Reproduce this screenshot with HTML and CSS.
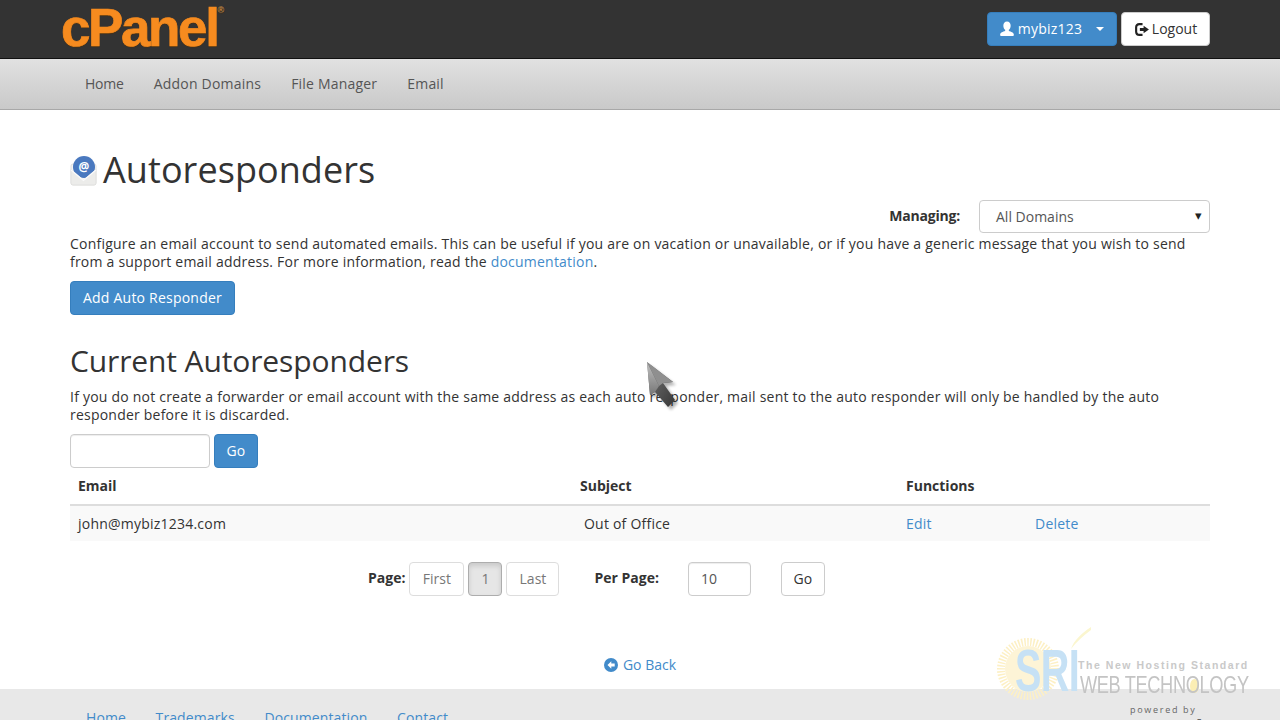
FILE: index.html
```html
<!DOCTYPE html>
<html lang="en">
<head>
<meta charset="utf-8">
<title>Autoresponders</title>
<link rel="stylesheet" href="styles.css">
</head>
<body>
<header class="topbar">
  <div class="logo">cPanel<sup class="reg">®</sup></div>
  <div class="top-actions">
    <a class="btn btn-primary user-btn">
      <svg class="ico" viewBox="0 0 14 14" width="16" height="16"><path fill="#fff" d="M7 .5c2 0 3.200 1.500 3.200 3.600 0 1.500-.7 2.900-1.600 3.600v1.100c1.900.7 4.400 1.400 4.400 3.200 0 .7-.4 1.100-1 1.100H2c-.6 0-1-.4-1-1.100 0-1.800 2.500-2.500 4.400-3.200V7.700C4.500 7 3.800 5.600 3.800 4.100 3.800 2 5 .5 7 .5z"/></svg>
      <span>mybiz123</span>
      <span class="caret"></span>
    </a>
    <a class="btn btn-default logout-btn">
      <svg class="ico" viewBox="0 0 15 14" width="16" height="15"><path fill="#222" d="M5 1h3v2H5C4 3 3 3.800 3 5v4c0 1.200 1 2 2 2h3v2H5C2.500 13 1 11.500 1 9V5c0-2.500 1.500-4 4-4zm4 2.600L14 7l-5 3.400V8.500H5.500v-3H9V3.600z"/></svg>
      <span>Logout</span>
    </a>
  </div>
</header>
<nav class="subnav">
  <a>Home</a><a>Addon Domains</a><a>File Manager</a><a>Email</a>
</nav>
<main class="content">
  <h1 class="page-title">
    <svg class="title-icon" viewBox="0 0 27 30" width="27" height="30">
      <rect x="1" y="8" width="25" height="21" rx="2" fill="#f6f6f5" stroke="#d8d8d6" stroke-width=".8"/>
      <circle cx="14" cy="11" r="11" fill="#4a79bf"/>
      <path d="M1 13.500L13.500 24 26 13.500V27a2 2 0 0 1-2 2H3a2 2 0 0 1-2-2z" fill="#ececea" stroke="#dcdcda" stroke-width=".6"/>
      <path d="M1 14L13.500 24.500 26 14" fill="none" stroke="#fafafa" stroke-width="1.200"/>
      <text x="14" y="15" class="at">@</text>
    </svg>
    <span>Autoresponders</span>
  </h1>
  <div class="managing">
    <label>Managing:</label>
    <div class="select"><span>All Domains</span><span class="select-arrow">▾</span></div>
  </div>
  <p class="para">Configure an email account to send automated emails. This can be useful if you are on vacation or unavailable, or if you have a generic message that you wish to send from a support email address. For more information, read the <a class="link">documentation</a>.</p>
  <a class="btn btn-primary add-btn">Add Auto Responder</a>
  <h2 class="section-title">Current Autoresponders</h2>
  <p class="para">If you do not create a forwarder or email account with the same address as each auto responder, mail sent to the auto responder will only be handled by the auto responder before it is discarded.</p>
  <div class="search">
    <div class="input search-input"></div>
    <a class="btn btn-primary go-btn">Go</a>
  </div>
  <table class="list">
    <colgroup><col class="c1"><col class="c2"><col class="c3"><col class="c4"></colgroup>
    <thead><tr><th>Email</th><th>Subject</th><th colspan="2">Functions</th></tr></thead>
    <tbody><tr><td>john@mybiz1234.com</td><td class="subject">Out of Office</td><td><a class="link">Edit</a></td><td><a class="link">Delete</a></td></tr></tbody>
  </table>
  <div class="pager">
    <b class="page-label">Page:</b>
    <a class="btn btn-off first">First</a>
    <a class="btn btn-current">1</a>
    <a class="btn btn-off last">Last</a>
    <b class="per-label">Per Page:</b>
    <div class="input per-input">10</div>
    <a class="btn btn-default per-go">Go</a>
  </div>
  <div class="goback">
    <svg viewBox="0 0 14 14" width="14" height="14"><circle cx="7" cy="7" r="7" fill="#428bca"/><path fill="#fff" d="M7.300 3.200L3.500 7l3.800 3.800V8.500h3.400v-3H7.300z"/></svg>
    <a class="link">Go Back</a>
  </div>
</main>
<footer class="footer">
  <a>Home</a><a>Trademarks</a><a>Documentation</a><a>Contact</a>
</footer>
<div class="watermark">
  <svg class="sun" viewBox="0 0 110 85" width="110" height="85">
    <circle cx="38" cy="44" r="27" fill="none" stroke="#fdf0c4" stroke-width="8" stroke-dasharray="1.500 1.500"/>
    <circle cx="38" cy="44" r="23" fill="#fdf4d6"/>
    <path d="M101 2C92 8 84 15 81 24c5-7 12-13 20-19z" fill="#fbf6cf"/>
  </svg>
  <span class="wm-sri">SRI</span>
  <span class="wm-tag">The New Hosting Standard</span>
  <span class="wm-dot"></span>
  <span class="wm-web">WEB TECHNOLOGY</span>
  <span class="wm-powered">powered by</span>
  <span class="wm-cpanel">cPanel</span>
</div>
<svg class="cursor" viewBox="0 0 40 54" width="40" height="54">
  <defs>
    <filter id="cs" x="-30%" y="-30%" width="160%" height="160%"><feGaussianBlur stdDeviation="1.800"/></filter>
    <linearGradient id="lf" x1="0" y1="0" x2="0" y2="1"><stop offset="0" stop-color="#c0c0c0"/><stop offset="1" stop-color="#777"/></linearGradient>
    <linearGradient id="rf" x1="0" y1="0" x2="1" y2="1"><stop offset="0" stop-color="#7a7a7a"/><stop offset="1" stop-color="#363636"/></linearGradient>
  </defs>
  <path d="M5 5L31 25 21 26 33 43 26 50 13 35 8 38z" fill="#000" opacity=".3" filter="url(#cs)"/>
  <path d="M2 2L5 35 10 32 23 47 30 40 18 23 28 22z" fill="url(#rf)"/>
  <path d="M2 2L5 35 10 32 14 26z" fill="url(#lf)"/>
  <path d="M2 2L14 26 18 23 28 22z" fill="#8f8f8f"/>
</svg>
</body>
</html>
```
FILE: styles.css
```css
* { box-sizing: border-box; }
html, body { margin: 0; height: 720px; overflow: hidden; }
body {
  font-family: "Open Sans", sans-serif;
  font-size: 14px;
  line-height: 18px;
  letter-spacing: .22px;
  color: #333;
  background: #fff;
  position: relative;
  display: flex;
  flex-direction: column;
}
b, th, label { letter-spacing: 0; }
.topbar {
  height: 59px;
  flex: none;
  background: #333;
  border-bottom: 1px solid #111;
  display: flex;
  justify-content: space-between;
  padding: 0 70px 0 61px;
}
.logo {
  font-family: "Liberation Sans", sans-serif;
  font-weight: 700;
  font-size: 53px;
  line-height: 56px;
  letter-spacing: -2.400px;
  color: #f68b1f;
  -webkit-text-stroke: .7px #f68b1f;
  text-shadow: 0 1px 1px #4a3010;
}
.reg {
  font-size: 9px;
  line-height: 0;
  letter-spacing: 0;
  color: #c08a48;
  -webkit-text-stroke: 0;
  vertical-align: 33px;
  margin-left: 0;
}
.top-actions { display: flex; gap: 4px; padding-top: 12px; }
.btn {
  display: inline-flex;
  align-items: center;
  justify-content: center;
  height: 34px;
  border: 1px solid transparent;
  border-radius: 4px;
  white-space: nowrap;
}
.btn-primary { background: #428bca; border-color: #357ebd; color: #fff; }
.btn-default { background: #fff; border-color: #ccc; color: #333; }
.user-btn { width: 130px; gap: 3px; padding-right: 2px; }
.caret {
  width: 0; height: 0;
  border-left: 4px solid transparent;
  border-right: 4px solid transparent;
  border-top: 4px solid #fff;
  margin-left: 10px;
  position: relative;
  left: 1px;
}
.logout-btn { width: 89px; gap: 2px; letter-spacing: 0; }
.ico { flex: none; }
.subnav {
  height: 51px;
  flex: none;
  background: linear-gradient(#e1e1e1, #c9c9c9);
  border-bottom: 1px solid #a8a8a8;
  display: flex;
  align-items: center;
  gap: 30px;
  padding-left: 85px;
  padding-bottom: 1px;
  letter-spacing: .2px;
}
.subnav a { color: #555; }
.subnav a:first-child { letter-spacing: -.2px; }
.content {
  flex: 1;
  padding: 0 70px;
}
.page-title {
  margin: 34px 0 0;
  height: 52px;
  display: flex;
  align-items: center;
  gap: 6px;
  font-size: 36px;
  line-height: 52px;
  font-weight: 400;
  letter-spacing: .07px;
  color: #333;
}
.title-icon { margin-top: 2px; flex: none; }
.at { font: 700 12px "Open Sans", sans-serif; fill: #fff; text-anchor: middle; letter-spacing: 0; }
.managing {
  display: flex;
  justify-content: flex-end;
  align-items: center;
  gap: 19px;
  margin-top: 4px;
}
.managing label { font-weight: 700; position: relative; top: -1px; letter-spacing: -.2px; }
.select {
  width: 231px;
  height: 33px;
  border: 1px solid #ccc;
  border-radius: 4px;
  padding: 0 7px 0 16px;
  display: flex;
  justify-content: space-between;
  align-items: center;
  color: #555;
  letter-spacing: 0;
}
.select-arrow { color: #222; font-size: 13px; position: relative; top: -2px; }
.para { margin: 2px 0 0; height: 36px; }
.link { color: #428bca; }
.add-btn { margin-top: 10px; width: 165px; }
.section-title {
  margin: 25px 0 0;
  height: 42px;
  font-size: 30px;
  line-height: 42px;
  font-weight: 400;
  letter-spacing: -.12px;
  color: #333;
}
.section-title + .para { margin-top: 6px; }
.search { display: flex; gap: 4px; margin-top: 10px; }
.input {
  border: 1px solid #ccc;
  border-radius: 4px;
  height: 34px;
  box-shadow: inset 0 1px 1px rgba(0,0,0,.075);
}
.search-input { width: 140px; }
.go-btn { width: 44px; }
.list { width: 1140px; border-collapse: collapse; table-layout: fixed; margin-top: 2px; }
.c1 { width: 502px; } .c2 { width: 326px; } .c3 { width: 129px; } .c4 { width: 183px; }
.list th {
  text-align: left;
  padding: 7px 8px 9px;
  font-weight: 700;
  border-bottom: 2px solid #ddd;
}
.list td { padding: 9px 8px 8px; background: #f9f9f9; }
.subject.subject { padding-left: 12px; }
.pager { display: flex; align-items: center; margin-top: 21px; padding-left: 298px; letter-spacing: 0; }
.page-label { position: relative; top: -1px; margin-right: 4px; }
.btn-off { background: #fff; border-color: #ddd; color: #777; margin-right: 4px; }
.first { width: 55px; }
.last { width: 53px; }
.btn-current {
  width: 34px; margin-right: 4px;
  background: #e6e6e6; border-color: #adadad; color: #777;
  box-shadow: inset 0 3px 5px rgba(0,0,0,.125);
}
.per-label { margin-left: 31px; position: relative; top: -1px; }
.per-input { width: 63px; margin-left: 29px; padding: 7px 12px; color: #555; }
.per-go { width: 44px; margin-left: 30px; }
.goback {
  display: flex;
  align-items: center;
  justify-content: center;
  gap: 5px;
  margin-top: 60px;
  letter-spacing: 0;
}
.footer {
  position: absolute;
  left: 0; right: 0; top: 689px; bottom: 0;
  background: #e8e8e8;
  display: flex;
  gap: 29.500px;
  padding: 20px 0 0 86px;
  letter-spacing: .12px;
}
.footer a { color: #428bca; white-space: nowrap; }
.watermark { position: absolute; left: 990px; top: 625px; width: 270px; height: 95px; overflow: hidden; pointer-events: none; }
.watermark > * { position: absolute; white-space: nowrap; }
.sun { left: 0; top: 0; }
.wm-sri { left: 25px; top: 16px; font: 700 60px/60px "Liberation Sans", sans-serif; color: #c6e1f5; letter-spacing: -1px; transform: scaleX(.66); transform-origin: left; }
.wm-tag { left: 88px; top: 33px; font: 700 10.500px/14px "Liberation Sans", sans-serif; letter-spacing: 1.550px; color: #c9c9c9; }
.wm-dot { left: 200px; top: 54px; width: 9px; height: 14px; border-radius: 50%; background: #fbeeb4; }
.wm-web { left: 90px; top: 46px; font: 400 24px/28px "Liberation Sans", sans-serif; color: #c4c4c4; letter-spacing: -.5px; transform: scaleX(.76); transform-origin: left; }
.wm-powered { left: 140px; top: 79px; font: 400 9px/12px "Open Sans", sans-serif; letter-spacing: 1.700px; color: #666; }
.wm-cpanel { left: 137px; top: 90px; font: 700 25px/28px "Liberation Sans", sans-serif; letter-spacing: -1px; color: #666; }
.cursor { position: absolute; left: 645px; top: 360px; pointer-events: none; }
```
